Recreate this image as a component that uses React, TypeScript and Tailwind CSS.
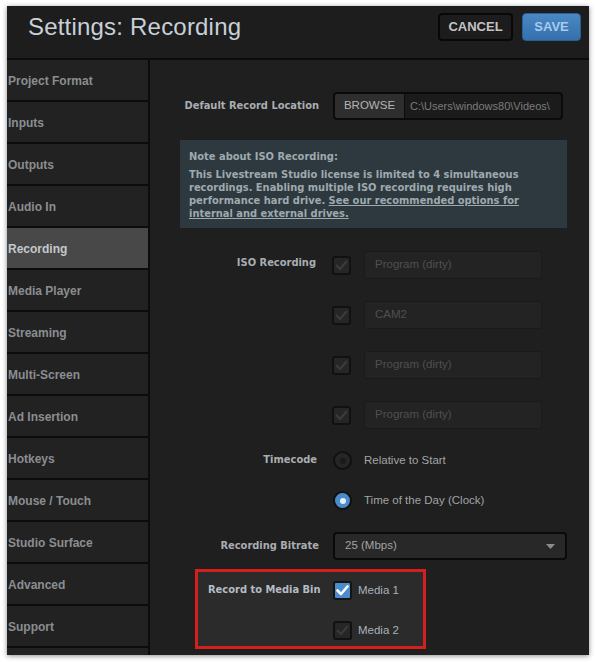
import React from 'react';

const sideItems = [
  'Project Format',
  'Inputs',
  'Outputs',
  'Audio In',
  'Recording',
  'Media Player',
  'Streaming',
  'Multi-Screen',
  'Ad Insertion',
  'Hotkeys',
  'Mouse / Touch',
  'Studio Surface',
  'Advanced',
  'Support',
  '',
];

const isoSources = ['Program (dirty)', 'CAM2', 'Program (dirty)', 'Program (dirty)'];

const labelFont = "font-['DejaVu_Sans_Condensed','DejaVu_Sans',sans-serif]";

function Check({ on = false }: { on?: boolean }) {
  return (
    <div
      className={`w-[19px] h-[19px] shrink-0 rounded-[3px] border-2 flex items-center justify-center ${
        on ? 'bg-[#4a8ccb] border-[#141414]' : 'bg-[#262626] border-[#111111]'
      }`}
    >
      <svg width="13" height="11" viewBox="0 0 13 11">
        <path
          d="M1.5 5.5 L5 9 L11.5 1.5"
          fill="none"
          stroke={on ? '#ffffff' : '#3c3c3c'}
          strokeWidth={on ? 2.6 : 2}
          strokeLinecap="round"
          strokeLinejoin="round"
        />
      </svg>
    </div>
  );
}

function Radio({ on = false }: { on?: boolean }) {
  return (
    <div
      className={`w-[19px] h-[19px] shrink-0 rounded-full border-2 border-[#111111] flex items-center justify-center ${
        on ? 'bg-[#4a8ccb]' : 'bg-[#262626]'
      }`}
    >
      <div className={`w-[6px] h-[6px] rounded-full ${on ? 'bg-[#e8eef4]' : 'bg-[#1a1a1a]'}`} />
    </div>
  );
}

function Label({ children, className = '' }: { children: React.ReactNode; className?: string }) {
  return (
    <div className={`w-[169px] shrink-0 text-right text-[11px] font-bold text-[#a9adb1] ${labelFont} ${className}`}>
      {children}
    </div>
  );
}

export default function App() {
  return (
    <div className="w-[596px] h-[662px] bg-white pt-[6px] pl-[7px] font-['Liberation_Sans',Arial,sans-serif]">
      <div className="w-[582px] h-[649px] bg-[#1f1f1f] flex flex-col overflow-hidden shadow-[0_1px_5px_rgba(0,0,0,0.45)]">
        {/* header */}
        <div className="h-[54px] shrink-0 bg-[#1d1d1d] flex items-start pt-[7px] pl-[21px] pr-[8px] border-b-2 border-[#0c0c0c]">
          <div className="h-[28px] flex items-center text-[24px] leading-none text-[#c8d0d8] tracking-[0.2px]">
            Settings: Recording
          </div>
          <div className="ml-auto flex gap-[9px]">
            <button className="h-[28px] w-[75px] rounded-[4px] bg-[#1c1c1c] border-2 border-[#080808] text-[13px] font-bold text-[#c3c3c3]">
              CANCEL
            </button>
            <button className="h-[28px] w-[59px] rounded-[4px] bg-gradient-to-b from-[#4a88c4] to-[#3370ac] border border-[#2c5f93] text-[13px] font-bold text-[#a9cbee]">
              SAVE
            </button>
          </div>
        </div>

        <div className="flex flex-1 min-h-0">
          {/* sidebar */}
          <div className="w-[143px] shrink-0 flex flex-col border-r-2 border-[#0c0c0c]">
            {sideItems.map((s, i) => (
              <div
                key={i}
                className={`h-[42px] shrink-0 flex items-center pl-px pt-px border-b-2 border-[#0c0c0c] text-[12px] font-bold ${
                  s === 'Recording' ? 'bg-[#484848] text-[#c4c8cc]' : 'bg-[#222222] text-[#8b8e91]'
                }`}
              >
                {s}
              </div>
            ))}
          </div>

          {/* content */}
          <div className="flex-1 pt-[32px]">
            <div className="flex items-center gap-[14px] h-[28px]">
              <Label>Default Record Location</Label>
              <div className="w-[230px] h-[28px] flex rounded-[4px] border-2 border-[#0a0a0a] bg-[#1b1b1b] overflow-hidden">
                <div className="w-[70px] shrink-0 bg-[#2e2e2e] border-r border-[#0a0a0a] flex items-center justify-center text-[11.5px] text-[#b4b4b4]">
                  BROWSE
                </div>
                <div className="flex items-center pl-[5px] text-[11px] text-[#7b7b7b] whitespace-nowrap">
                  C:\Users\windows80\Videos\
                </div>
              </div>
            </div>

            <div className={`ml-[30px] mt-[20px] w-[387px] h-[88px] bg-[#2d393f] pl-[9px] pt-[10px] text-[11px] leading-[13px] font-bold text-[#9fa9ae] ${labelFont}`}>
              <div className="mb-[5px]">Note about ISO Recording:</div>
              <div className="whitespace-nowrap">
                This Livestream Studio license is limited to 4 simultaneous
                <br />
                recordings. Enabling multiple ISO recording requires high
                <br />
                performance hard drive. <span className="underline">See our recommended options for</span>
                <br />
                <span className="underline">internal and external drives.</span>
              </div>
            </div>

            <div className="mt-[23px] flex flex-col gap-[22px]">
              {isoSources.map((s, i) => (
                <div key={i} className="flex items-center h-[28px]">
                  <Label className={`self-start pt-[4px] pr-[3px] ${i === 0 ? '' : 'invisible'}`}>ISO Recording</Label>
                  <div className="ml-[13px]">
                    <Check />
                  </div>
                  <div className="ml-[13px] w-[178px] h-[28px] rounded-[3px] bg-[#232323] border border-[#1a1a1a] flex items-center pl-[10px] text-[11.5px] text-[#4f4f4f]">
                    {s}
                  </div>
                </div>
              ))}
            </div>

            <div className="mt-[22px] flex flex-col gap-[21px]">
              {['Relative to Start', 'Time of the Day (Clock)'].map((s, i) => (
                <div key={i} className="flex items-center h-[19px]">
                  <Label className={`pr-[2px] ${i === 0 ? '' : 'invisible'}`}>Timecode</Label>
                  <div className="ml-[14px]">
                    <Radio on={i === 1} />
                  </div>
                  <div className="ml-[12px] text-[11.5px] text-[#a3a3a3]">{s}</div>
                </div>
              ))}
            </div>

            <div className="mt-[22px] flex items-center gap-[14px] h-[28px]">
              <Label>Recording Bitrate</Label>
              <div className="w-[234px] h-[28px] rounded-[4px] border-2 border-[#0a0a0a] bg-[#282828] flex items-center pl-[10px] pr-[10px] text-[11.5px] text-[#a3a3a3]">
                25 (Mbps)
                <svg className="ml-auto" width="9" height="5" viewBox="0 0 9 5">
                  <path d="M0 0 H9 L4.5 5 Z" fill="#8c8c8c" />
                </svg>
              </div>
            </div>

            <div className="ml-[45px] mt-[9px] w-[231px] h-[80px] border-[3px] border-[#d51f1f] bg-[#2b2b2b] pt-[9px] flex flex-col gap-[21px]">
              {['Media 1', 'Media 2'].map((s, i) => (
                <div key={i} className="flex items-center h-[19px]">
                  <div
                    className={`w-[135px] shrink-0 pl-[10px] text-[11px] font-bold text-[#b4bcc4] whitespace-nowrap ${labelFont} ${
                      i === 0 ? '' : 'invisible'
                    }`}
                  >
                    Record to Media Bin
                  </div>
                  <Check on={i === 0} />
                  <div className="ml-[6px] text-[11.5px] text-[#a8b2bc]">{s}</div>
                </div>
              ))}
            </div>
          </div>
        </div>
      </div>
    </div>
  );
}
